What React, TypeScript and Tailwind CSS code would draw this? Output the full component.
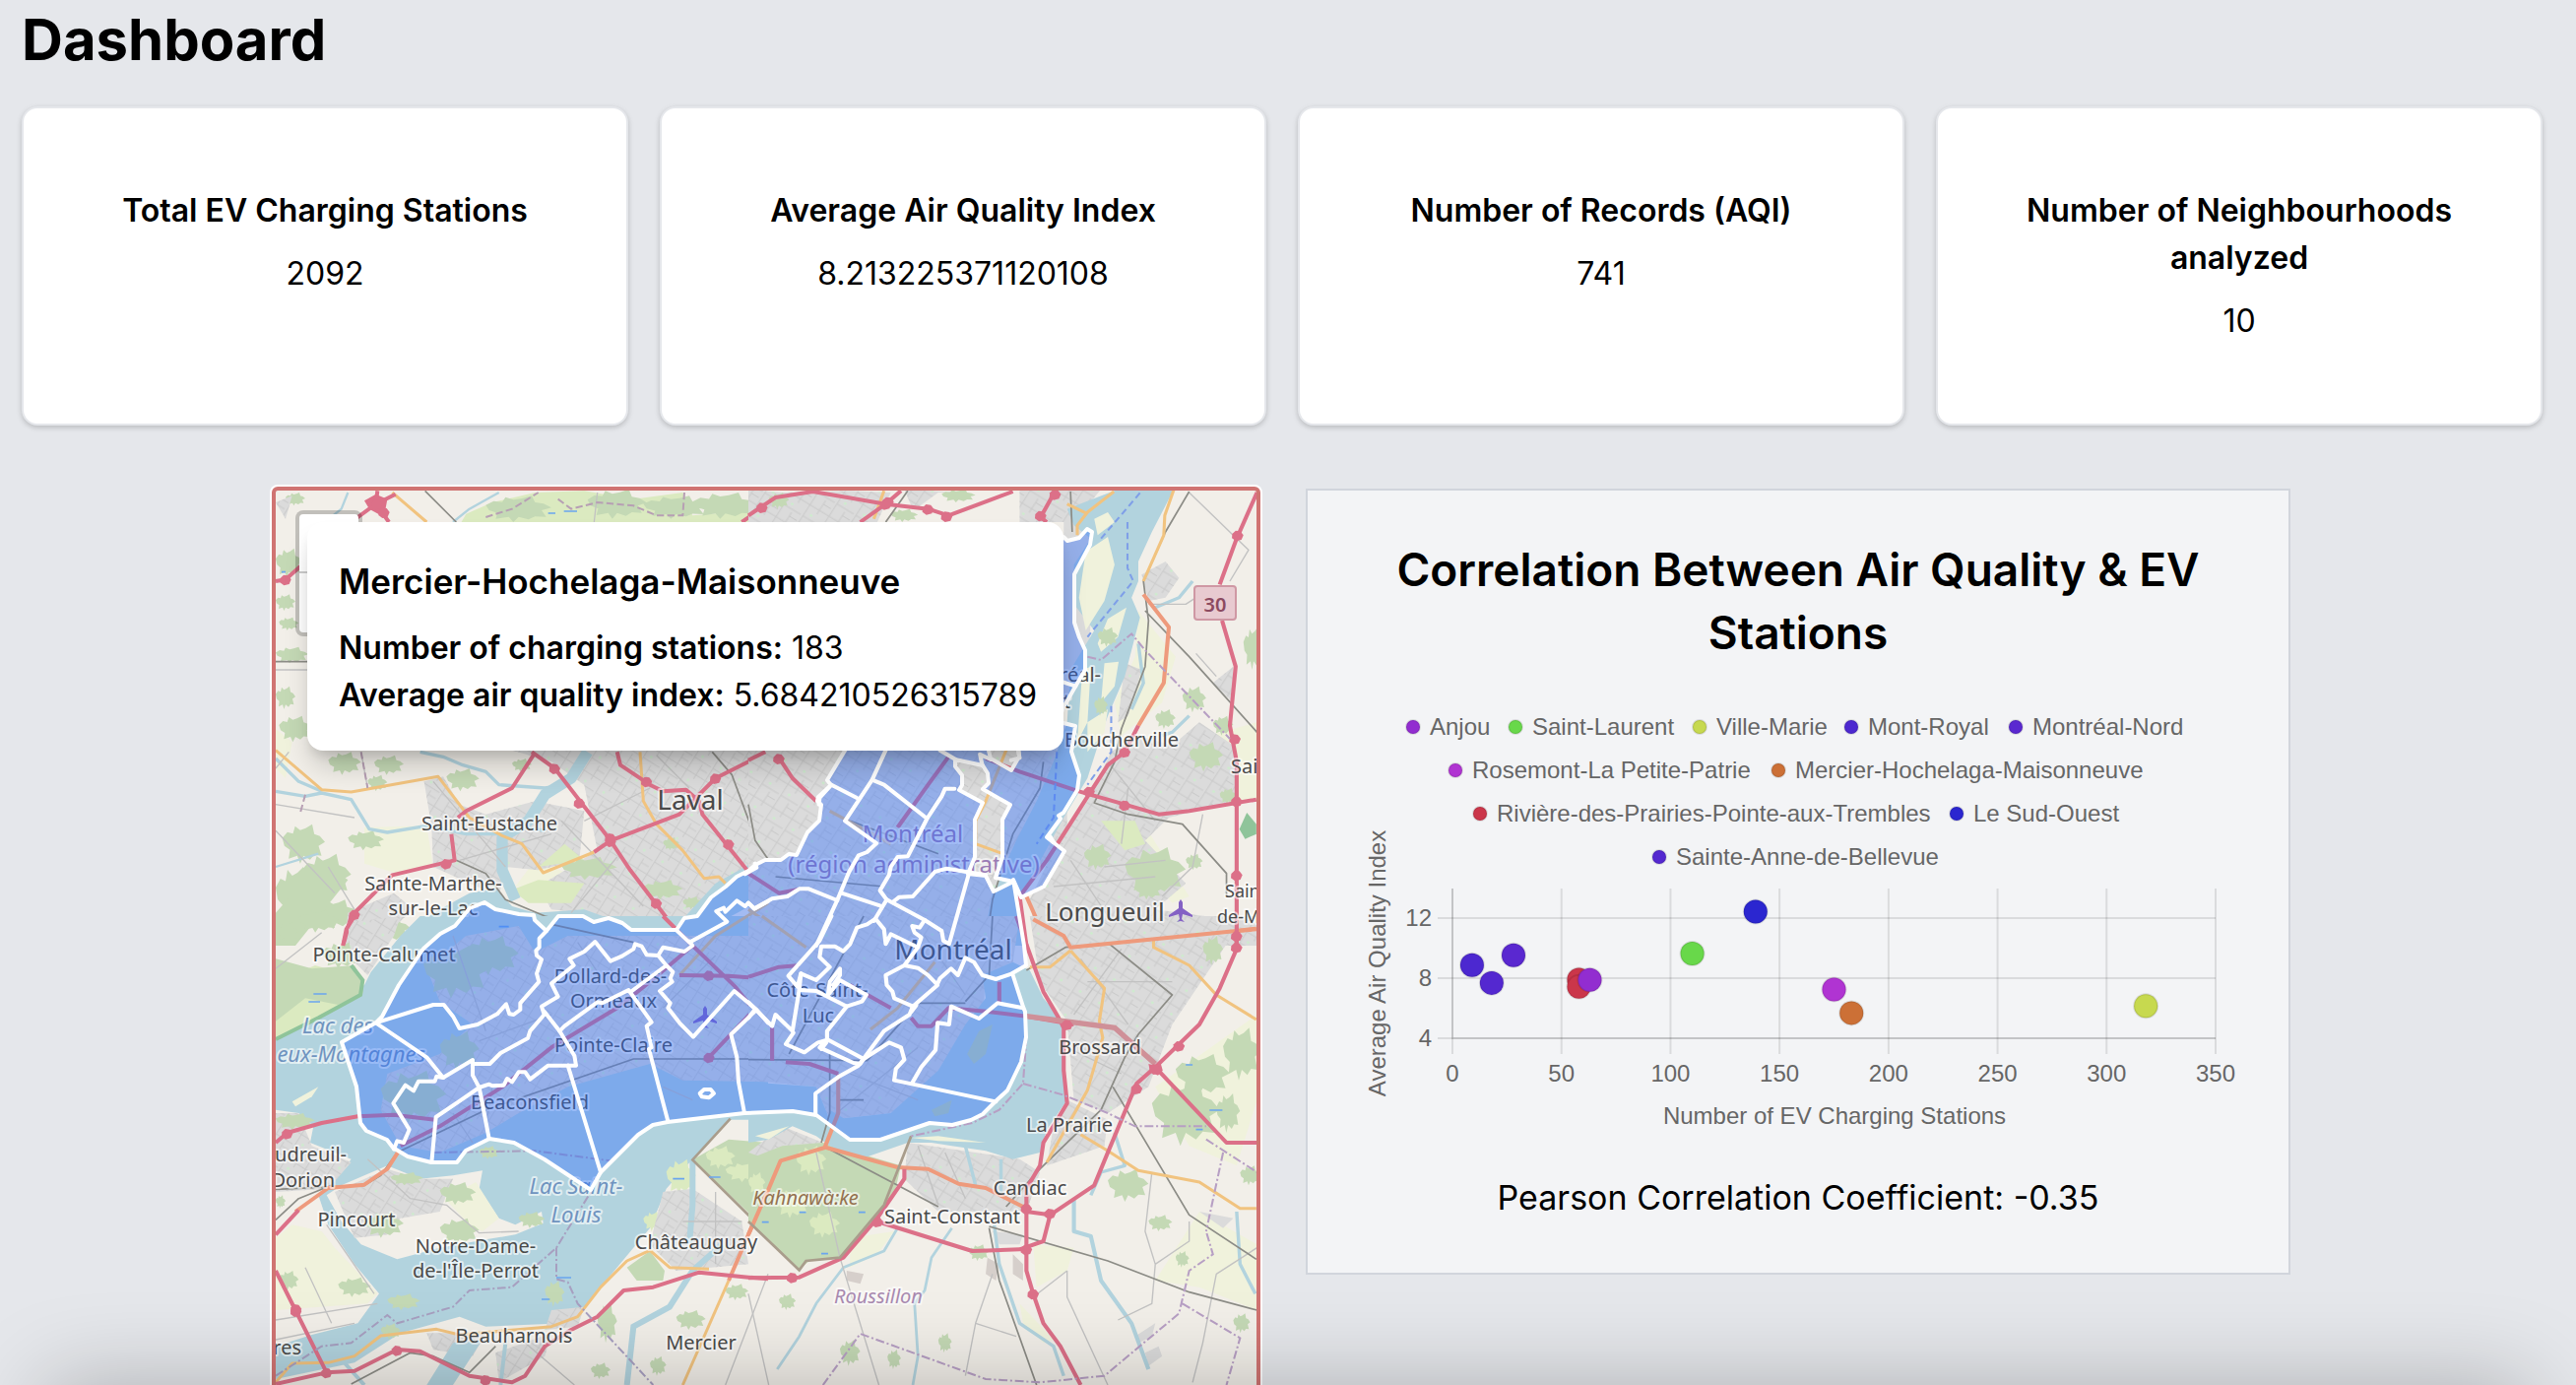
import type { ReactNode } from "react";

type Stat = { title: string; value: string };

const STATS: Stat[] = [
  { title: "Total EV Charging Stations", value: "2092" },
  { title: "Average Air Quality Index", value: "8.213225371120108" },
  { title: "Number of Records (AQI)", value: "741" },
  { title: "Number of Neighbourhoods analyzed", value: "10" },
];

function StatCard({ title, value }: Stat) {
  return (
    <div className="rounded-2xl border-2 border-gray-200 bg-white p-20 text-center text-[32px] leading-[48px] shadow-[0_2px_6px_rgba(0,0,0,0.12),0_2px_4px_rgba(0,0,0,0.08)]">
      <h2 className="-mx-4 font-semibold">{title}</h2>
      <p className="mt-4">{value}</p>
    </div>
  );
}

/* ---------- map ---------- */

const COLORS = {
  urban: "#dbdbdb",
  water: "#b2d3de",
  wood: "#c4d9b5",
  farm: "#f0f2dc",
  grass: "#dbeac0",
};

// each tile draws in its own units, about three to a map unit
type TileProps = { x: number; y: number; sx?: number; children: ReactNode };

function Tile({ x, y, sx = 3, children }: TileProps) {
  return <g transform={`translate(${x} ${y}) scale(${1 / sx} ${1 / 3})`}>{children}</g>;
}

// ragged little polygon, used for woods and parks
function blob(x: number, y: number, w: number, h: number) {
  const p = [
    [0, 0.35], [0.12, 0.2], [0.25, 0.24], [0.3, 0.05], [0.42, 0.15], [0.55, 0.1], [0.7, 0], [0.75, 0.25],
    [0.88, 0.3], [1, 0.45], [0.85, 0.55], [0.92, 0.8], [0.75, 0.78], [0.65, 0.9], [0.5, 0.8], [0.42, 1],
    [0.35, 0.8], [0.15, 0.88], [0.18, 0.65], [0.05, 0.55],
  ];
  return "M" + p.map(([a, b]) => `${x + a * w},${y + b * h}`).join(" L") + "Z";
}

function blobs(list: number[][]) {
  return list.map(([x, y, w, h]) => blob(x, y, w, h)).join(" ");
}

function Urban({ d }: { d: string }) {
  return (
    <>
      <path d={d} fill={COLORS.urban} />
      <path d={d} fill="url(#streets)" />
    </>
  );
}

type RoadsProps = { motorway?: string; trunk?: string; primary?: string; rail?: string; minor?: string };

function Roads({ motorway, trunk, primary, rail, minor }: RoadsProps) {
  return (
    <g fill="none" strokeLinejoin="round">
      <path d={minor} stroke="#c2c2c2" strokeWidth="4" />
      <path d={rail} stroke="#8c8c86" strokeWidth="5" />
      <path d={primary} stroke="#f1c37f" strokeWidth="9" />
      <path d={trunk} stroke="#ee9a7c" strokeWidth="12" />
      <path d={motorway} stroke="#dc7088" strokeWidth="12" />
    </g>
  );
}

function Junctions({ at }: { at: number[][] }) {
  return (
    <g fill="#dc7088">
      {at.map(([x, y], i) => (
        <path key={i} d={`M${x - 16},${y - 4} l10,-10 l14,2 l9,12 l-6,14 l-16,4 l-12,-9Z`} />
      ))}
    </g>
  );
}

const ISLAND =
  "M347,1058 L382,1038 L388,1032 L405,1000 L430,963 L447,948 L462,940 L477,922 L492,916 L503,923 L527,928 L542,929 L543,934 L555,945 L567,930 L592,930 L603,936 L618,932 L632,937 L641,944 L687,944 L695,932 L708,930 L722,911 L737,900 L748,890 L760,884 L767,878 L777,873 L793,873 L801,867 L809,868 L820,845 L832,833 L834,817 L830,813 L831,809 L844,797 L840,792 L858,762 L900,700 L1000,600 L1080,545 L1084,549 L1096,546 L1104,537 L1109,540 L1107,553 L1091,583 L1091,632 L1096,647 L1102,660 L1102,680 L1092,697 L1080,718 L1074,734 L1080,734 L1092,737 L1088,763 L1096,787 L1094,802 L1080,825 L1075,828 L1077,831 L1063,850 L1072,857 L1081,864 L1060,900 L1037,911 L1029,893 L1040,960 L1042,980 L1028,988 L1039,1022 L1041,1027 L1042,1053 L1037,1078 L1023,1107 L1011,1118 L998,1131 L986,1137 L967,1142 L944,1140 L894,1157 L863,1157 L829,1132 L805,1128 L756,1130 L678,1139 L663,1142 L648,1152 L610,1190 L600,1208 L553,1177 L522,1160 L497,1156 L473,1168 L464,1180 L438,1180 L414,1174 L399,1165 L393,1157 L372,1148 L366,1140 L362,1103Z" +
  "M970,771 L998,777 L1003,785 L1004,795 L998,801 L1026,817 L1018,832 L1018,870 L1011,891 L1029,895 L1009,905 L1001,889 L983,887 L990,870 L990,832 L998,815 L974,802 L977,797 L977,787 L970,778Z" +
  "M1004,762 L1006,770 L1027,782 L1035,768 L1034,750 L1004,750Z";

type MapLabel = {
  text: string;
  x: number;
  y: number;
  size?: number;
  fill?: string;
  italic?: boolean;
  anchor?: "start" | "middle" | "end";
};

const LAKE = "#6f93bf";
const REGION = "#9a7bb5";

const LABELS: MapLabel[] = [
  { text: "Saint-Eustache", x: 497, y: 835 },
  { text: "Laval", x: 701, y: 811, size: 28 },
  { text: "Sainte-Marthe-", x: 440, y: 896 },
  { text: "sur-le-Lac", x: 440, y: 921 },
  { text: "Pointe-Calumet", x: 390, y: 968 },
  { text: "Lac des", x: 343, y: 1040, size: 22, fill: LAKE, italic: true },
  { text: "eux-Montagnes", x: 432, y: 1069, size: 22, fill: LAKE, italic: true, anchor: "end" },
  { text: "Dollard-des-", x: 620, y: 990 },
  { text: "Ormeaux", x: 623, y: 1015 },
  { text: "Pointe-Claire", x: 623, y: 1060 },
  { text: "Beaconsfield", x: 538, y: 1118 },
  { text: "udreuil-", x: 352, y: 1171, anchor: "end" },
  { text: "Dorion", x: 340, y: 1197, anchor: "end" },
  { text: "Pincourt", x: 362, y: 1237 },
  { text: "Notre-Dame-", x: 483, y: 1264 },
  { text: "de-l'Île-Perrot", x: 483, y: 1289 },
  { text: "Lac Saint-", x: 585, y: 1203, size: 22, fill: LAKE, italic: true },
  { text: "Louis", x: 585, y: 1232, size: 22, fill: LAKE, italic: true },
  { text: "Châteauguay", x: 707, y: 1260 },
  { text: "Beauharnois", x: 522, y: 1355 },
  { text: "Mercier", x: 712, y: 1362 },
  { text: "res", x: 306, y: 1367, anchor: "end" },
  { text: "Kahnawà:ke", x: 818, y: 1215, fill: "#94714f", italic: true },
  { text: "Saint-Constant", x: 967, y: 1234 },
  { text: "Candiac", x: 1046, y: 1205 },
  { text: "La Prairie", x: 1086, y: 1141 },
  { text: "Brossard", x: 1117, y: 1062 },
  { text: "Roussillon", x: 892, y: 1315, fill: "#a98ab0", italic: true },
  { text: "Côte-Saint-", x: 830, y: 1004 },
  { text: "Luc", x: 831, y: 1030 },
  { text: "Montréal", x: 968, y: 963, size: 28 },
  { text: "Longueuil", x: 1122, y: 925, size: 26 },
  { text: "Boucherville", x: 1139, y: 750 },
  { text: "Montréal", x: 927, y: 845, size: 24, fill: REGION },
  { text: "(région administrative)", x: 928, y: 876, size: 24, fill: REGION },
  { text: "Sai", x: 1250, y: 777, anchor: "start" },
  { text: "Sain", x: 1244, y: 904, size: 18, anchor: "start" },
  { text: "de-M", x: 1236, y: 930, size: 18, anchor: "start" },
  { text: "Montréal-", x: 1118, y: 684, anchor: "end" },
  { text: "Est", x: 1087, y: 711, anchor: "end" },
];

function Plane({ x, y }: { x: number; y: number }) {
  return (
    <path
      transform={`translate(${x} ${y})`}
      d="M0,-12 L2,-9 L2,-3 L12,4 L12,6 L2,3 L1,8 L4,11 L0,10 L-4,11 L-1,8 L-2,3 L-12,6 L-12,4 L-2,-3 L-2,-9Z"
      fill="#8461c4"
    />
  );
}

function BaseMap() {
  return (
    <>
      <rect x="278" y="496" width="1000" height="960" fill="#f2efe9" />

      {/* north-west */}
      <Tile x={260} y={480}>
        <path d="M330,1080 L520,1075 L540,1200 L430,1220 L330,1190Z M1000,1240 L790,1260 L850,1180Z M60,780 L110,820 L90,930 L60,900Z" fill={COLORS.farm} />
        <path d="M640,125 L720,90 L850,60 L1000,55 L1150,80 L1300,60 L1330,130 L1560,110 V160 H620Z" fill={COLORS.grass} />
        <path
          d={blobs([
            [60, 230, 80, 90], [60, 370, 60, 50], [70, 440, 60, 40], [60, 530, 100, 50], [60, 650, 60, 70],
            [70, 740, 100, 80], [90, 60, 60, 40], [220, 850, 100, 70], [360, 860, 90, 60], [580, 900, 100, 70],
            [80, 1070, 130, 120], [140, 1160, 150, 140], [60, 1200, 120, 180], [930, 1170, 170, 70],
            [700, 70, 200, 80], [1010, 50, 180, 90], [1180, 70, 200, 70], [1330, 60, 200, 80], [180, 1300, 130, 90], [350, 1350, 120, 80],
            [280, 1090, 110, 60], [340, 920, 60, 50],
          ])}
          fill={COLORS.wood}
        />
        <path d="M60,1340 L200,1180 L280,1240 L120,1440 H60Z" fill={COLORS.wood} />
        <Urban d="M512,940 L570,925 L620,1010 L700,1040 L850,1000 L1000,1030 L985,1180 L860,1210 L760,1200 L740,1290 L540,1200 L535,1080Z" />
        <Urban d="M780,845 H1560 V1180 L1430,1260 L1280,1390 L1140,1390 L1000,1340 L900,1330 L860,1260 L1040,1150 L1000,950 L900,880Z" />
        <Urban d="M280,1340 L420,1280 L480,1330 L400,1400 L270,1440Z M60,90 L110,70 L90,140Z" />
        <path d="M780,1270 L860,1240 L1000,1250 L960,1310 L830,1310Z M860,1200 L940,1130 L1000,1180Z" fill={COLORS.grass} />
        <path d={blobs([[930, 1170, 170, 70], [1180, 1240, 120, 60], [780, 870, 60, 40], [1240, 1110, 50, 40], [1300, 1290, 60, 40]])} fill={COLORS.wood} />
        <g fill="none" stroke={COLORS.water} strokeWidth="10" strokeLinejoin="round">
          <path d="M60,970 L150,985 L200,975 L290,995 L345,1085 L400,1095 L520,1075 L640,1100 L740,1100 L820,1080 L880,1090" />
          <path d="M500,850 L570,865 L630,890 L700,910 L740,950 L880,960 L950,950" />
          <path d="M60,870 L130,940 L200,970" />
          <path d="M60,1200 L190,1160 M280,60 L260,110 L210,150 M740,60 L650,110 L600,150" strokeWidth="7" />
          <path d="M1010,850 L960,930 L880,980 L830,1060 L750,1110 L750,1210 L790,1300" strokeWidth="34" />
        </g>
        <path d="M430,1440 L480,1380 L560,1330 L650,1280 L730,1265 L780,1320 L850,1340 L1000,1330 L1140,1380 L1290,1370 L1400,1250 L1560,1160 V1290 L1280,1440Z" fill={COLORS.water} />
        <Roads
          minor="M60,1010 L300,1050 M60,1090 L240,1280 M540,940 L760,1200 M620,1180 L900,1100 M1000,1060 L1200,960 M100,850 L60,900 M60,600 H300 M320,850 L340,960 M1040,60 L1030,150 M930,1060 L1180,1320 M960,1340 L1100,1170 M1220,860 L1320,960 M220,1200 L300,1330"
          rail="M60,575 H160 M515,55 L610,150 M1390,850 L1450,920 L1520,1110 L1560,1170 M610,1180 L700,1220 L760,1300 L880,1350 L1060,1390"
          primary="M60,845 L200,965 L290,972 L555,925 L650,1050 L750,1105 L810,1130 L875,1218 L1030,1155 M1170,850 L1180,1000 L1220,1070 L1300,1150 L1365,1235 L1410,1230 L1430,1250 M415,60 L520,150"
          motorway="M370,55 L365,95 L425,65 M365,95 L405,150 M365,95 L290,150 M60,330 L90,325 L135,285 M1480,150 L1560,95 M840,850 L910,900 L1080,1120 L1140,1210 L1300,1420 M845,860 L780,960 L640,1030 L615,1050 M595,1100 L605,1180 L415,1225 L290,1350 L265,1440 M1030,1155 L1080,1120 L1290,1040 L1400,930 L1560,850 M1100,850 L1110,890 L1200,950 L1240,970 L1310,965 L1350,1000 L1360,1040 L1500,1215"
        />
        <path d="M330,85 L365,65 L400,80 L390,135 L345,110Z" fill="#dc7088" />
        <Junctions at={[[368, 95], [390, 120], [90, 325], [1080, 1122], [1080, 1112], [1190, 940], [1400, 930], [1540, 100], [580, 1190], [910, 900], [985, 1005], [1440, 1130], [300, 1345], [1220, 1310]]} />
        <path d="M700,135 L780,110 L860,60 M920,80 L960,110 L1040,90 L1150,100 L1220,130 L1300,130 L1305,60 M320,850 L340,960 M150,980 L135,1035" fill="none" stroke="#b79fb4" strokeWidth="6" strokeDasharray="22 10" />
        <path d="M890,123 H912 M938,117 H978 M78,302 H90" stroke="#6aa5ee" strokeWidth="5" />
      </Tile>

      {/* north-east */}
      <Tile x={760} y={480} sx={2.904}>
        <Urban d="M0,50 L100,60 L300,55 L420,60 L380,150 H0Z M800,50 H1040 L960,150 H800Z M460,50 L620,60 L600,110 L480,100Z" />
        <path d="M560,60 H780 V150 H440Z" fill="#f2efe9" />
        <path d={blobs([[60, 60, 60, 50], [570, 50, 100, 40], [420, 110, 80, 40]])} fill={COLORS.wood} />
        <path d="M1150,420 L1260,560 L1220,700 L1100,800 L1080,700 L1140,560Z M1250,830 L1500,760 V1000 L1440,1000 L1330,1030 L1300,900Z M1040,1060 L1160,1060 L1300,1290 L1250,1310 L1200,1250 L1060,1180Z" fill={COLORS.farm} />
        <path d="M0,845 H940 V1100 L800,1300 L820,1440 H0Z" fill={COLORS.urban} />
        <path d="M0,845 H940 V1100 L800,1300 L820,1440 H0Z" fill="url(#streets)" />
        <path d="M930,150 L1020,150 L1000,700 H930Z" fill={COLORS.urban} />
        <Urban d="M1000,1000 L1070,850 L1150,800 L1250,830 L1330,760 L1430,830 L1440,1000 L1240,1050 L1170,1120 L1290,1250 L1200,1330 L1560,1380 V1440 H850 L830,1300 L900,1150Z" />
        <Urban d="M1160,310 L1230,270 L1270,320 L1230,380 L1180,390Z M1370,640 L1430,590 L1430,700Z M1110,580 L1160,600 L1120,740 L1090,760Z" />
        <path d="M1040,1060 L1140,1060 L1170,1130 L1110,1150Z" fill={COLORS.grass} />
        <path
          d="M1090,50 H1255 L1190,180 L1150,270 L1150,330 L1130,380 L1155,440 L1130,540 L1110,620 L1060,740 L1040,800 L1000,930 L930,1050 L830,1240 L800,1300 L810,1440 H690 L720,1280 L790,1120 L850,1000 L900,880 L940,760 L950,600 L1020,480 L960,400 L960,280 L1010,200 L960,160 L940,110Z"
          fill={COLORS.water}
        />
        <path d="M995,240 L1060,195 L1080,280 L1050,390 L995,480 L975,380Z M1060,445 L1115,410 L1090,500 L1040,545 L1030,520Z M1050,580 L1092,575 L1080,650 L1040,700Z M1000,760 L1060,720 L1050,790 L1000,850Z M1020,140 L1060,120 L1080,150 L1030,190Z M985,600 L1010,590 L1000,760 L970,820Z" fill={COLORS.farm} />
        <path d={blobs([[1110, 1140, 180, 150], [990, 1130, 80, 80], [1140, 1240, 80, 60], [1200, 720, 60, 60], [1280, 650, 70, 80], [1300, 820, 100, 90], [1370, 740, 60, 60], [1460, 470, 60, 130], [1020, 680, 40, 60], [1390, 960, 50, 50], [1290, 1160, 50, 50], [1030, 470, 60, 60]])} fill={COLORS.wood} />
        <path d="M1470,1035 L1498,1070 V1100 L1465,1115 L1448,1085Z" fill="#8fc49a" />
        <path d="M1310,330 L1270,380 L1200,410 M1150,520 L1165,640 L1130,720 M1300,740 L1250,790 L1220,800" fill="none" stroke={COLORS.water} strokeWidth="10" />
        <Roads
          minor="M1300,60 L1440,200 L1475,235 L1420,330 M1180,400 H1290 L1320,380 M1060,880 L1200,1060 M1050,1200 L1230,1180 M950,1180 L1080,1380 M1120,960 L1100,1130 M900,1260 L1200,1230 M1340,1040 L1310,1200 L1220,1290 M1320,550 L1380,620"
          rail="M470,55 L405,150 M950,57 L955,180 M1300,57 L1230,180 L1165,330 L1180,450 L1170,590 L1100,780 L1080,880 L1020,1005 L1120,1040 L1280,1070 L1410,1220 V1290 M1170,420 L1300,560 L1500,790 M0,1010 L20,1120 L60,1180 M870,880 L860,960 L780,1100 L720,1300 L700,1440 M80,1230 L400,1260 M300,1060 L560,1160 M960,1437 L1498,1390"
          primary="M1078,57 L1000,120 L970,160 V190 M1255,50 L1228,130 L1225,190 L1165,330 M940,95 L1000,125 M400,55 L370,140 M760,845 L700,1000 L670,1060 V1130 L750,1160 M100,1400 L0,1330 M240,1030 L420,1130"
          trunk="M1165,370 L1240,470 L1225,640 L1150,770 M820,1290 L850,1360 L920,1390 L950,1440 M960,1437 L1200,1415 L1498,1390"
          motorway="M0,130 L80,75 L190,57 L405,95 L530,110 L590,130 L780,57 M405,95 L330,150 M405,95 L450,55 M905,55 L862,135 L880,150 M1500,60 L1440,200 L1390,340 M1397,450 L1437,590 L1420,770 L1440,880 V1440 M700,870 L800,910 L975,970 L1110,1010 L1210,1040 L1300,1030 L1498,995 M1150,770 L1110,850 L1060,890 L1010,970 L930,1100 L880,1180 L800,1290 L820,1440 M85,860 L130,930 L200,1000 M0,875 L50,850 M590,865 L530,950 L440,1080 M0,1220 L90,1280 L150,1268"
        />
        <Junctions at={[[405, 95], [412, 88], [40, 105], [530, 110], [585, 132], [905, 65], [862, 130], [1443, 190], [1440, 1000], [1005, 970], [1110, 1012], [90, 870], [1435, 810], [1440, 1225], [1110, 850]]} />
        <path d="M1040,200 L1160,55 M1118,150 V290 L1135,330 L1000,500 M1070,710 V850 L1000,950 M910,850 L900,1050 L850,1130" fill="none" stroke="#7f9fe8" strokeWidth="6" strokeDasharray="20 12" />
        <path d="M1000,560 L1040,570 L1130,490 L1170,540 L1420,810" fill="none" stroke="#b79fc4" strokeWidth="6" strokeDasharray="26 8 6 8" />
      </Tile>

      {/* south-west */}
      <Tile x={260} y={930}>
        <path d="M60,370 L330,210 L350,170 L440,60 L500,0 H1560 V620 H1440 L1330,740 L1250,830 L1200,950 L1000,1190 L940,1240 L700,1250 L620,1220 L440,1270 L300,1360 L60,1410Z" fill={COLORS.water} />
        <path d="M60,200 L180,150 L320,190 L325,235 L60,375Z" fill={COLORS.grass} />
        <path d="M60,130 L170,160 L300,150 L325,195 V235 L250,270 L150,250 L60,320Z" fill={COLORS.wood} />
        <path d={blobs([[60, 20, 70, 60], [130, -20, 120, 70], [200, 80, 120, 80]])} fill={COLORS.wood} />
        <path d="M290,150 L325,195 L318,240 L190,310 L60,375" fill="none" stroke="#8fc49a" strokeWidth="12" />
        <Urban d="M280,20 L440,0 L420,60 L340,180 L290,130Z" />
        <path d="M60,590 L130,600 L175,640 L165,690 L290,740 L220,830 L190,850 L220,940 L300,1060 L375,1150 L310,1240 L170,1275 L60,1310Z" fill="#f2efe9" />
        <Urban d="M60,600 L130,600 L170,700 L290,750 L220,830 L60,840Z" />
        <path d="M110,940 L200,960 L240,1010 L370,1150 L340,1180 L60,1200 V980Z" fill={COLORS.farm} />
        <path d="M215,850 L260,820 L400,760 L500,800 L600,790 L690,775 L680,830 L740,920 L790,940 L870,900 L875,935 L790,970 L700,985 L560,1010 L430,1045 L320,1000 L260,930Z" fill="#f2efe9" />
        <Urban d="M240,840 L400,770 L500,800 L600,800 L560,900 L440,920 L400,970 L300,980Z" />
        <path d="M575,860 L670,810 L740,920 L690,960 L650,940Z" fill={COLORS.farm} />
        <path d="M110,565 L190,520 L170,550 L120,580Z" fill={COLORS.farm} />
        <Urban d="M520,160 L640,60 L800,30 L850,110 L950,60 L1560,60 V505 L1300,500 L1200,450 L950,520 L800,600 L700,660 L560,720 L440,700 L380,590 L400,480 L560,420 L660,330 L560,260Z" />
        <path d={blobs([[510, 90, 200, 160], [640, 60, 160, 120], [380, 470, 200, 160], [560, 350, 120, 120], [60, 850, 30, 40]])} fill={COLORS.wood} />
        <path d={blobs([[560, 810, 110, 70], [330, 900, 120, 80], [560, 920, 120, 80], [680, 700, 60, 40], [410, 780, 100, 40], [800, 900, 80, 50], [70, 1080, 60, 60], [250, 1100, 100, 60], [60, 600, 120, 50], [400, 1150, 100, 50], [880, 1110, 60, 80], [380, 1240, 60, 50]])} fill={COLORS.wood} />
        <path d="M1330,742 L1440,680 L1560,690 V960Z" fill={COLORS.wood} />
        <path d={blobs([[1250, 740, 90, 110], [1180, 900, 60, 60], [1370, 700, 90, 70], [1430, 750, 120, 60]])} fill={COLORS.grass} />
        <Urban d="M1240,840 L1330,830 L1480,930 L1500,1060 L1280,1080 L1200,1000Z M900,1200 L1000,1190 L980,1250 L880,1260Z M730,1330 L900,1270 L880,1340 L740,1420Z M520,1270 H700 L660,1340 L540,1320Z" />
        <path d="M1130,1070 L1200,1020 L1245,1080 L1240,1110 L1160,1110Z" fill={COLORS.wood} />
        <path d={blobs([[1040, 1180, 60, 120], [1280, 1200, 90, 60], [1020, 1360, 60, 50], [1430, 1120, 70, 50], [1200, 1340, 50, 60]])} fill={COLORS.wood} />
        <path d="M600,1300 L690,1290 L600,1428 H520Z" fill={COLORS.water} />
        <g fill="none" stroke={COLORS.water} strokeWidth="12">
          <path d="M1330,740 V880 L1320,1000 M1420,1000 L1330,1080 L1260,1190 L1150,1250 L1130,1428" strokeWidth="18" />
          <path d="M760,1300 L745,1428 M260,1350 L330,1428" />
        </g>
        <Roads
          minor="M60,160 L200,50 M60,1230 L370,1180 M215,940 L360,1150 M150,1070 L230,1240 M340,740 L470,860 L580,880 L680,965 L800,960 M820,1300 L970,1428 M1560,1090 L1430,1428 M600,60 L700,350 M680,380 L900,300 M980,80 L1100,260 M1240,280 L1400,120 M1330,560 L1240,520 M700,640 L720,520 M600,600 L660,690 M1300,930 H1480 M1400,840 V1060 M60,1290 L300,1240"
          rail="M60,832 L330,820 L380,790 L430,720 L700,590 L1150,435 H1560 M60,925 L130,860 L230,820 M900,25 L1150,80 M290,1425 L470,1330 L540,1340 L650,1390 L730,1310"
          primary="M60,1420 L110,1362 L220,1360 L300,1340 L380,1278 L550,1258 L620,1275 L900,1250 L980,1220 L1050,1130 L1130,1050 L1200,1018 L1260,1070 L1380,1075 M1440,1110 L1300,1428 M1290,180 L1400,60 L1560,-40"
          trunk="M120,900 L220,828 L330,818 L400,770 L435,715 M1560,830 L1500,970 L1440,1110"
          motorway="M265,90 L275,40 L300,0 M1240,0 L1325,85 L1460,215 L1560,340 M60,690 L95,660 L200,630 L310,610 L420,605 L545,620 M440,700 L560,640 L750,520 L900,400 L1100,280 L1200,200 L1330,90 M1290,180 L1440,182 L1500,187 L1560,165 M1380,430 L1560,240 M60,1425 L215,1390 L300,1385 L430,1320 L500,1325 L650,1400 L780,1420 L820,1400 L880,1310 L960,1260 L1040,1220 L1120,1140 L1210,1130 L1350,1085 L1500,1100 L1560,1105 M60,1080 L120,1200 L215,1390 M60,970 L130,895"
        />
        <Junctions at={[[95, 662], [122, 1203], [122, 1196], [215, 1390], [430, 1322], [700, 1412], [1380, 430], [1380, 180]]} />
        <path d="M60,1400 L200,1310 L290,1300 L400,1215 L430,1240 L600,1190 L650,1140 L780,1130 L915,1010 L1020,840 M915,1010 V1105 L950,1115 L980,1180 L1210,1428 M540,720 L850,715 L1080,745" fill="none" stroke="#a79fc0" strokeWidth="6" strokeDasharray="26 8 6 8" />
        <path d="M1445,617 L1330,742 L1560,970" fill="none" stroke="#a99d8c" strokeWidth="8" />
        <path d="M175,237 H215 M160,261 H195 M740,32 H770 M915,1101 H960 M870,1167 H895 M1270,800 H1305 M1380,795 H1415" stroke="#6aa5ee" strokeWidth="5" />
      </Tile>

      {/* south-east */}
      <Tile x={760} y={930} sx={2.904}>
        <Urban d="M0,0 H800 L780,140 L700,180 L690,330 L600,470 L420,600 L240,620 L200,520 L0,500Z" />
        <Urban d="M830,0 H1500 L1440,40 L1250,330 L1180,520 L1060,600 L960,560 L940,320 L860,200Z M470,690 L800,740 L860,780 L820,900 L560,900 L460,800Z M940,560 L1060,620 L1050,700 L880,760 L900,640Z M100,640 L220,690 L60,740 L0,720Z" />
        <path d="M1200,520 L1500,300 V560 L1440,760 L1300,700Z M300,980 L430,960 L380,1030 L300,1070Z M840,1000 L960,1010 L940,1080 L850,1130Z M1330,900 L1500,1000 V1200 L1330,1130 L1200,1110Z M800,1180 L900,1290 L870,1300 L810,1240Z" fill={COLORS.farm} />
        <path d="M0,740 L100,700 L220,690 L450,760 L430,850 L380,930 L270,1040 L180,1050 L150,1075 L0,930Z" fill={COLORS.wood} />
        <path d={blobs([[140, 700, 90, 90], [80, 830, 100, 90], [180, 900, 90, 80], [0, 780, 50, 70]])} fill={COLORS.grass} />
        <path
          d="M0,505 L200,520 L240,620 L420,600 L560,470 L640,330 L700,250 L690,180 L780,140 L830,165 L870,250 L920,310 L925,340 L930,470 L940,560 L880,650 L860,720 L780,740 L700,715 L600,700 L540,690 L470,690 L330,740 L240,700 L200,670 L130,640 L60,680 L0,690Z"
          fill={COLORS.water}
        />
        <path d="M645,420 L680,350 L720,330 L700,420 L665,450Z M540,590 L600,560 L590,600 L550,610Z" fill={COLORS.wood} />
        <path d="M240,590 L320,640 L300,700 L235,690Z" fill={COLORS.water} />
        <path d="M480,675 L560,670 L700,690 L560,685Z M20,670 L120,640 L60,680Z" fill={COLORS.farm} />
        <path d={blobs([[1190, 500, 200, 200], [1260, 420, 160, 130], [1400, 340, 110, 160], [1380, 540, 70, 120], [1060, 770, 120, 100], [1180, 910, 70, 50], [560, 1270, 40, 60], [1260, 1020, 40, 50], [90, 1150, 50, 50], [1430, 1210, 50, 60], [410, 1320, 40, 60], [270, 1290, 60, 80], [650, 1000, 60, 50], [1340, 60, 60, 90], [1450, 760, 60, 60]])} fill={COLORS.wood} />
        <path d="M1140,1280 L1200,1240 L1190,1280 L1150,1300Z M1170,1330 L1210,1310 L1220,1340 L1180,1370Z M1330,900 L1430,920 L1400,950Z M720,960 L810,970 L800,1000 L740,1000Z" fill={COLORS.urban} />
        <path d="M290,1080 L340,1090 L330,1120 L290,1110Z M780,1030 L810,1060 V1110 L780,1090Z M705,1040 L740,1060 L730,1110 L700,1090Z" fill="#d6cfcb" />
        <g fill="none" stroke={COLORS.water} strokeWidth="8" strokeLinejoin="round">
          <path d="M440,950 L400,1020 L280,1070 L200,1180 L150,1280 L85,1380" />
          <path d="M600,950 L540,1040 L520,1140 L490,1180 L500,1340 L485,1428" />
          <path d="M725,940 L740,1060 L800,1240 L900,1310 L930,1400" strokeWidth="10" />
          <path d="M960,860 V960 L1010,975 L1040,1110 L1130,1240 L1180,1380" strokeWidth="12" />
          <path d="M1440,900 L1450,1060 L1495,1150 M1080,660 L1110,760 L1040,780 L1010,850 M640,700 L670,820 M745,740 V850" strokeWidth="10" />
        </g>
        <Roads
          minor="M200,720 L270,1040 L385,1428 M720,1090 L670,1240 L640,1400 M1190,780 L1170,960 L1200,1060 L1190,1180 L1090,1230 M840,1160 L940,1080 M940,1080 V1160 L1060,1428 M1300,930 V990 L1200,1060 M670,1240 L790,1280 M1500,1010 L1380,1090 L1340,1300 L1310,1420 M0,1150 L60,1428 M980,130 L1120,330 M1000,200 L1250,200 M1100,100 L960,300 M940,400 L1100,480 M500,700 L560,880 M580,720 L640,860 M520,60 L640,240 M300,480 L500,560 M260,600 L500,400"
          rail="M230,705 L330,760 L560,885 M710,945 L1060,1050 L1300,1145 L1500,1200 M710,950 L740,1110 L850,1428 M820,165 L935,95 L1065,85 L1250,240 L1150,360 L1110,430 L1040,590 L860,770 L760,885 M1075,520 L1300,910 L1498,1045 M340,0 L120,420 M0,437 L350,440 L500,265 L640,265 M240,420 V600 L215,690 M720,0 L710,180 L640,260 M270,560 H340"
          primary="M950,105 L1050,220 L1035,320 L1045,370 L1000,530 L880,750 M950,105 L890,155 H830 M1195,75 V95 L1300,150 L1380,240 L1498,315 M980,665 L1060,715 L1150,775 L1330,810 L1450,890 H1498 M360,345 L440,280 L550,140 M40,0 L170,95"
          trunk="M265,480 V600 L225,705 L95,745 L60,830 L0,970 M230,705 L440,765 L530,770 L620,815 L700,828 L820,890 M840,10 L930,60 L950,95 L1440,45 L1498,38"
          motorway="M790,0 L870,230 L915,310 L930,340 V470 L940,570 L870,690 L860,760 L820,830 V1080 L840,1150 L870,1240 L920,1310 L980,1428 M0,1102 L150,1100 L280,1040 L380,920 L460,800 V770 M380,930 L660,1020 L800,1015 L870,990 L890,910 L1020,820 L1060,720 L1145,510 L1200,460 L1330,330 L1390,220 L1440,100 V0 M1200,460 L1410,690 H1500 M820,900 L890,910 M820,305 L960,330 M0,185 L90,155 L150,150 M70,440 V340 M110,445 L180,450 L265,480 M300,210 L420,280 M480,310 L500,335 H540 L590,280 L700,290 L820,305 M740,270 V200"
        />
        <path d="M820,305 L1080,340 L1200,450" fill="none" stroke="#cf9098" strokeWidth="16" />
        <path d="M1180,450 L1200,455 L1215,445 L1222,470 L1208,485 L1185,475Z" fill="#dc7088" />
        <Junctions at={[[1200, 465], [820, 890], [820, 1015], [890, 905], [380, 930], [840, 1150], [1440, 95], [1440, 60], [1145, 525], [940, 330], [130, 1100], [1270, 395]]} />
        <path d="M0,930 L150,1078 L170,1050 L270,1040 L400,880 L480,670" fill="none" stroke="#a99d8c" strokeWidth="8" />
        <path d="M820,370 L810,510 L740,590 L660,630 L480,670 M810,510 L930,545 L1060,600 L1140,640 H1350 M220,1428 L330,1272 L620,1380 L700,1410 L860,1420 L1050,1400 L1270,1210 L1300,1080 L1370,1030 L1350,960 M1280,1180 L1450,1285 L1410,1428 M1400,720 L1350,960 M1350,680 L1500,780" fill="none" stroke="#b79fc4" strokeWidth="6" strokeDasharray="26 8 6 8" />
        <path d="M1360,591 H1398 M1320,650 H1340 M215,1028 H235 M150,902 H170 M1290,453 H1310 M325,902 H345 M40,932 H60" stroke="#6aa5ee" strokeWidth="5" />
      </Tile>
    </>
  );
}

function Boroughs() {
  return (
    <g strokeLinejoin="round" strokeLinecap="round">
      <path d={ISLAND} fill="#2d6eff" fillOpacity="0.4" fillRule="evenodd" stroke="#fff" strokeWidth="4" />
      <g fill="none" stroke="#fff" strokeWidth="12">
        <Tile x={260} y={480}>
          <path d="M1280,1392 L1320,1430 L1435,1367 L1402,1335 L1425,1325 L1430,1337 L1465,1303 L1490,1320 L1500,1310 L1518,1328 L1560,1305" />
          <path d="M1490,1222 L1525,1202 L1520,1190" />
        </Tile>
        <Tile x={760} y={480} sx={2.904}>
          <path d="M0,1310 L18,1327 L70,1297 L115,1290 L150,1267 L178,1267 L262,1302" />
          <path d="M405,845 L365,935 L285,1060 L378,1128 L350,1155 L325,1165 L297,1215 L262,1302 L200,1440" />
          <path d="M245,950 L320,990 M365,935 L400,950 L527,1053 M240,955 L210,990 L208,1010" />
          <path d="M608,962 L580,962 L570,985 L527,1053 L470,1168 L440,1170 L420,1200 L415,1225 L388,1272 L408,1300 L370,1365" />
          <path d="M275,1280 L388,1318 M408,1300 L520,1362 L570,1395 L575,1425 L592,1435 L650,1222" />
          <path d="M425,1308 L445,1292 L485,1290 L550,1215 L585,1205 L700,1225" />
          <path d="M565,845 L610,872 M690,892 L683,857 L715,873 M930,638 L965,650" />
          <path d="M795,845 L800,868 L775,875 M890,1108 L900,1125" />
        </Tile>
        <Tile x={760} y={930} sx={2.904}>
          <path d="M245,0 L210,75 L118,182 L145,215 L155,175 L200,195 L240,155 L210,125 L215,92 L255,92 L280,107 L300,85 L320,35 L350,25 L375,8 L400,40 L405,85 L420,55 L500,95 L460,150 L405,180 L408,210 L425,230 L430,250 L485,275 L558,210 L530,180 L500,158 L460,150" />
          <path d="M558,205 L565,190 L598,160 L618,180 L640,127 L665,140 L690,180 L730,192 L778,175" />
          <path d="M520,12 L505,35 L483,30 L490,50 L510,65 L500,95" />
          <path d="M155,175 L150,225 L130,350 L80,300 L70,335 L0,262 M0,310 L15,290" />
          <path d="M150,225 L200,228 L290,275 L335,260 L348,240 L270,195 L235,240 L240,200 L270,160 L270,180 L250,210" />
          <path d="M290,275 L232,350 V375 L340,435 L330,450 L310,447 L210,400 L230,378 L205,385 L165,415 L110,390 L133,355 M230,385 L215,405" />
          <path d="M485,275 L475,300 L400,350 L325,455 L265,490 L198,540 V605 M495,272 L480,292" />
          <path d="M340,435 L415,385 L450,400 L460,437 L435,465 L430,500 L730,565 M485,505 L510,460 L552,408 L558,325 L592,330 L598,275 L680,312 L735,265 L810,280" />
        </Tile>
        <Tile x={260} y={930}>
          <path d="M885,45 L863,68 V95 L853,105 L855,120 L870,132 L855,175 L862,200 L805,265 V285 L785,300 L772,298 L762,268 L735,298 L675,330 L620,342 L600,305 L572,270 L540,270 L365,325 L520,430 L570,492 L660,438 V485 L680,522 L710,678" />
          <path d="M570,492 L550,488 L545,503 H495 L480,532 L455,515 L418,570 L467,650 L450,690 L430,685 L420,710" />
          <path d="M660,450 H712 L745,417 L828,372 L835,350 L878,300 L870,275 L920,245 L900,205 L968,150 L955,130 L1000,108 L1033,78 L1080,137 L1115,122 L1150,100 L1155,85 L1175,92 L1190,118 L1225,120 L1240,95 L1305,108 L1330,90 L1320,77" />
          <path d="M878,290 L925,350 L970,425 L975,455 H890 L835,497 L820,475 H800 L780,505 L765,495 L755,515 L720,517 L710,512 L680,522 L625,560 L548,612 L535,750" />
          <path d="M950,455 L1050,780 M925,350 L940,335 L1040,262 L1055,265 L1135,225 L1205,323 L1190,335 L1205,400 L1197,405 L1255,625" />
          <path d="M1145,228 L1250,150 L1225,120 M1250,150 L1270,170 L1262,190 L1268,200 L1230,228 L1262,265 L1255,280 L1290,325 L1332,368 L1457,228 L1525,285 L1560,325 M1525,285 L1447,360 L1465,430 L1470,505 L1488,600" />
          <path d="M1352,540 L1365,528 H1385 L1395,540 L1380,553 L1358,550Z" />
        </Tile>
      </g>
    </g>
  );
}

function MontrealMap() {
  return (
    <svg viewBox="278 496 1000 960" className="block w-full" role="img" aria-label="Map of Montréal boroughs">
      <defs>
        <pattern id="streets" width="84" height="66" patternUnits="userSpaceOnUse" patternTransform="rotate(-58)">
          <path d="M0,8 H84 M0,40 H50 M14,0 V66 M58,8 V66 M36,40 V66" fill="none" stroke="#cacaca" strokeWidth="3" />
          <circle cx="72" cy="28" r="4" fill="#cdeccd" />
        </pattern>
      </defs>
      <BaseMap />

      <rect x="1213" y="595" width="42" height="34" rx="3" fill="#e8cad0" stroke="#cf98a4" strokeWidth="2" />
      <text x="1234" y="613" textAnchor="middle" dominantBaseline="central" fill="#8c4a60" className="font-['Noto_Sans',sans-serif] text-[20px] font-semibold">
        30
      </text>

      <g className="font-['Noto_Sans',sans-serif]" stroke="#ffffff" strokeOpacity="0.6" strokeWidth="4" strokeLinejoin="round" paintOrder="stroke">
        {LABELS.map((l) => (
          <text
            key={l.text + l.y}
            x={l.x}
            y={l.y}
            fontSize={l.size ?? 20}
            fontStyle={l.italic ? "italic" : "normal"}
            textAnchor={l.anchor ?? "middle"}
            dominantBaseline="central"
            fill={l.fill ?? "#4a4a4a"}
          >
            {l.text}
          </text>
        ))}
      </g>
      <Plane x={1199} y={925} />
      <Plane x={716} y={1033} />
      <Boroughs />
    </svg>
  );
}

function MapPanel() {
  return (
    <section className="relative rounded-sm shadow-[0_0_0_4px_#ffffff] outline-4 -outline-offset-2 outline-[#d07472]">
      <MontrealMap />
      <div className="absolute top-[22px] left-[22px] flex w-[68px] flex-col rounded-lg border-4 border-black/20 bg-white bg-clip-padding">
        <button type="button" aria-label="Zoom in" className="h-[60px] border-b-2 border-[#cccccc]" />
        <button type="button" aria-label="Zoom out" className="h-[60px]" />
      </div>
      <div className="absolute top-[34px] left-[34px] w-[768px] rounded-2xl bg-white p-8 text-[32px] leading-[48px] whitespace-nowrap shadow-[0_20px_30px_-6px_rgba(0,0,0,0.2),0_8px_12px_-4px_rgba(0,0,0,0.12)]">
        <h3 className="mb-4 text-[35px] leading-[56px] font-semibold">Mercier-Hochelaga-Maisonneuve</h3>
        <p>
          <strong className="font-semibold">Number of charging stations:</strong> 183
        </p>
        <p>
          <strong className="font-semibold">Average air quality index:</strong> 5.684210526315789
        </p>
      </div>
    </section>
  );
}

/* ---------- scatter chart ---------- */

type Borough = { name: string; color: string; x: number; row: number };

const LEGEND: Borough[] = [
  { name: "Anjou", color: "#922dd0", x: 59, row: 0 },
  { name: "Saint-Laurent", color: "#68d84a", x: 163, row: 0 },
  { name: "Ville-Marie", color: "#c7d94f", x: 350, row: 0 },
  { name: "Mont-Royal", color: "#4c28d0", x: 504, row: 0 },
  { name: "Montréal-Nord", color: "#5a28d0", x: 671, row: 0 },
  { name: "Rosemont-La Petite-Patrie", color: "#b034d2", x: 102, row: 1 },
  { name: "Mercier-Hochelaga-Maisonneuve", color: "#cc7036", x: 430, row: 1 },
  { name: "Rivière-des-Prairies-Pointe-aux-Trembles", color: "#cb364a", x: 127, row: 2 },
  { name: "Le Sud-Ouest", color: "#2b26d0", x: 611, row: 2 },
  { name: "Sainte-Anne-de-Bellevue", color: "#5428d0", x: 309, row: 3 },
];

const POINTS = [
  { x: 9, y: 8.87, color: "#4c28d0" },
  { x: 18, y: 7.68, color: "#5428d0" },
  { x: 28, y: 9.53, color: "#5a28d0" },
  { x: 58, y: 7.9, color: "#cb364a" },
  { x: 58, y: 7.43, color: "#cb364a" },
  { x: 63, y: 7.89, color: "#922dd0" },
  { x: 110, y: 9.64, color: "#68d84a" },
  { x: 139, y: 12.43, color: "#2b26d0" },
  { x: 175, y: 7.25, color: "#b034d2" },
  { x: 183, y: 5.68, color: "#cc7036" },
  { x: 318, y: 6.15, color: "#c7d94f" },
];

const X_TICKS = [0, 50, 100, 150, 200, 250, 300, 350];
const Y_TICKS = [4, 8, 12];

const xPos = (v: number) => 99 + (v * 775) / 350;
const yPos = (v: number) => 348 - ((v - 4) * 61) / 4;

function ScatterChart() {
  return (
    <svg
      viewBox="0 0 900 454"
      className="mt-8 block w-full font-['Liberation_Sans',Arial,sans-serif] text-[24px]"
      fill="#666666"
      role="img"
      aria-label="Air quality against number of EV charging stations"
    >
      {LEGEND.map((b) => (
        <g key={b.name}>
          <circle cx={b.x} cy={32 + b.row * 44} r="7" fill={b.color} stroke="#000000" strokeOpacity="0.1" strokeWidth="2" />
          <text x={b.x + 17} y={40 + b.row * 44}>{b.name}</text>
        </g>
      ))}

      <g stroke="#000000" strokeOpacity="0.1" strokeWidth="2">
        {X_TICKS.map((t) => (
          <line key={t} x1={xPos(t)} x2={xPos(t)} y1="196" y2="364" />
        ))}
        {Y_TICKS.map((t) => (
          <line key={t} x1="84" x2="874" y1={yPos(t)} y2={yPos(t)} />
        ))}
        <path d="M99,196 V348 H874" fill="none" />
      </g>

      {X_TICKS.map((t) => (
        <text key={t} x={xPos(t)} y="392" textAnchor="middle">{t}</text>
      ))}
      {Y_TICKS.map((t) => (
        <text key={t} x="78" y={yPos(t) + 8} textAnchor="end">{t}</text>
      ))}
      <text x="487" y="435" textAnchor="middle">Number of EV Charging Stations</text>
      <text transform="translate(31 272) rotate(-90)" textAnchor="middle">Average Air Quality Index</text>

      {POINTS.map((p, i) => (
        <circle key={i} cx={xPos(p.x)} cy={yPos(p.y)} r="12" fill={p.color} stroke="#000000" strokeOpacity="0.1" strokeWidth="2" />
      ))}
    </svg>
  );
}

function CorrelationPanel() {
  return (
    <section className="border-2 border-gray-300 bg-gray-100 p-12 text-center">
      <h2 className="text-[46px] leading-[64px] font-semibold">Correlation Between Air Quality &amp; EV Stations</h2>
      <ScatterChart />
      <p className="mt-7 text-[34px] leading-[56px]">Pearson Correlation Coefficient: -0.35</p>
    </section>
  );
}

export default function App() {
  return (
    <div className="relative h-screen overflow-hidden bg-gray-200 font-['Inter',sans-serif] text-black">
      <main className="pt-1 pr-[34px] pl-[22px]">
        <h1 className="mb-8 text-[58px] leading-[72px] font-bold">Dashboard</h1>
        <div className="grid grid-cols-4 gap-8">
          {STATS.map((s) => (
            <StatCard key={s.title} {...s} />
          ))}
        </div>
        <div className="mx-auto mt-16 grid w-4/5 grid-cols-2 items-start gap-12">
          <MapPanel />
          <CorrelationPanel />
        </div>
      </main>
      <div className="pointer-events-none absolute inset-x-12 top-full h-40 shadow-[0_0_90px_rgba(0,0,0,0.25)]" />
    </div>
  );
}
